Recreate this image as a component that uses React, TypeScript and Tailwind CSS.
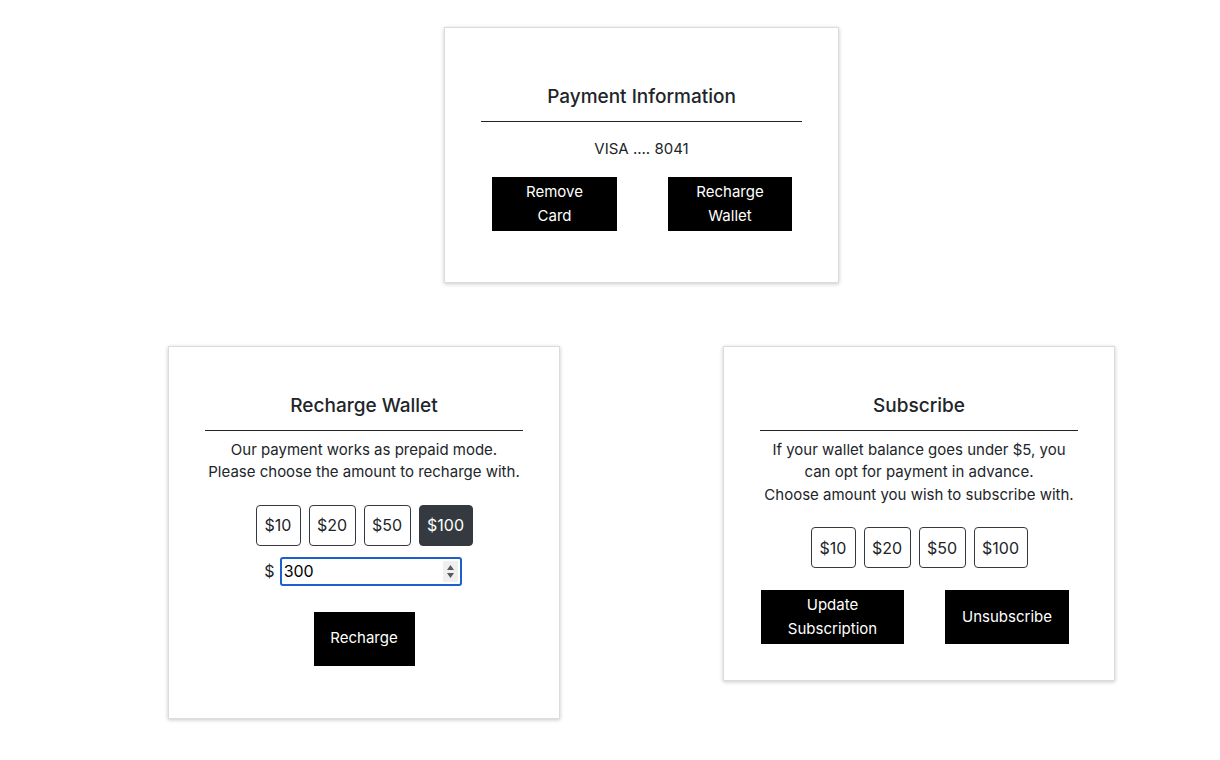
import React, { useState } from 'react';

const amounts = [
  { label: '$10', w: 'w-[45px]' },
  { label: '$20', w: 'w-[47px]' },
  { label: '$50', w: 'w-[47px]' },
  { label: '$100', w: 'w-[54px]' },
];

interface AmountPickerProps {
  selected: string | null;
  onSelect: (v: string) => void;
}

const AmountPicker: React.FC<AmountPickerProps> = ({ selected, onSelect }) => (
  <div className="flex justify-center gap-[8px]">
    {amounts.map((a) => (
      <button
        key={a.label}
        onClick={() => onSelect(a.label)}
        className={`${a.w} h-[41px] rounded-[4px] border text-[16px] leading-none ${
          selected === a.label
            ? 'bg-[#343a40] border-[#343a40] text-white'
            : 'bg-white border-[#343a40] text-[#212529]'
        }`}
      >
        {a.label}
      </button>
    ))}
  </div>
);

const Card: React.FC<{ className?: string; title: string; children: React.ReactNode }> = ({ className, title, children }) => (
  <div className={`bg-white border border-[#dcdcdc] shadow-[0_1px_4px_rgba(0,0,0,0.22)] px-[36px] ${className ?? ''}`}>
    <h5 className="text-center text-[19px] leading-[24px] font-medium text-[#212529]">{title}</h5>
    <div className="mt-[12px] h-px bg-[#212529]" />
    {children}
  </div>
);

const App: React.FC = () => {
  const [recharge, setRecharge] = useState<string | null>('$100');
  const [subscribe, setSubscribe] = useState<string | null>(null);
  const [custom, setCustom] = useState('300');

  return (
    <div
      className="min-h-[760px] w-full bg-white pl-[63px] text-[#212529]"
      style={{ fontFamily: 'Inter, "Liberation Sans", sans-serif' }}
    >
      <div className="flex flex-col items-center pt-[27px]">
        {/* payment info */}
        <Card className="w-[395px] pt-[57px] pb-[51px]" title="Payment Information">
          <p className="mt-[16px] text-center text-[15px] leading-[22.5px]">VISA .... 8041</p>
          <div className="mt-[16px] flex gap-[51px] pl-[11px]">
            <button className="w-[125px] h-[54px] bg-black text-white text-[15px] leading-[24px]">
              Remove<br />Card
            </button>
            <button className="w-[124px] h-[54px] bg-black text-white text-[15px] leading-[24px]">
              Recharge<br />Wallet
            </button>
          </div>
        </Card>

        <div className="mt-[63px] flex items-start gap-[163px]">
          {/* recharge */}
          <Card className="w-[392px] pt-[47px] pb-[52px]" title="Recharge Wallet">
            <p className="mt-[8px] text-center text-[15px] leading-[22.5px]">
              Our payment works as prepaid mode.
              <br />
              Please choose the amount to recharge with.
            </p>
            <div className="mt-[21px]">
              <AmountPicker selected={recharge} onSelect={setRecharge} />
            </div>
            <div className="mt-[11px] flex items-center justify-center gap-[5px] pr-[2px]">
              <span className="text-[16px]">$</span>
              <div className="flex h-[29px] w-[182px] items-center rounded-[3px] border-2 border-[#1c5fcf] pl-[2px] pr-[2px]">
                <input
                  value={custom}
                  onChange={(e) => setCustom(e.target.value)}
                  className="min-w-0 flex-1 bg-transparent text-[16px] text-black outline-none"
                />
                <div className="flex h-[21px] w-[15px] flex-col items-center justify-center gap-[3px] bg-[#efefef]">
                  <svg width="7" height="5" viewBox="0 0 7 5"><path d="M3.5 0L7 5H0z" fill="#5a5a5a" /></svg>
                  <svg width="7" height="5" viewBox="0 0 7 5"><path d="M0 0h7L3.5 5z" fill="#5a5a5a" /></svg>
                </div>
              </div>
            </div>
            <div className="mt-[26px] flex justify-center">
              <button className="w-[101px] h-[54px] bg-black text-white text-[15px]">Recharge</button>
            </div>
          </Card>

          {/* subscribe */}
          <Card className="w-[392px] pt-[47px] pb-[36px]" title="Subscribe">
            <p className="mt-[8px] text-center text-[15px] leading-[22.5px]">
              If your wallet balance goes under $5, you
              <br />
              can opt for payment in advance.
              <br />
              Choose amount you wish to subscribe with.
            </p>
            <div className="mt-[21px]">
              <AmountPicker selected={subscribe} onSelect={setSubscribe} />
            </div>
            <div className="mt-[22px] flex gap-[41px] pl-[1px]">
              <button className="w-[143px] h-[54px] bg-black text-white text-[15px] leading-[24px]">
                Update<br />Subscription
              </button>
              <button className="w-[124px] h-[54px] bg-black text-white text-[15px]">Unsubscribe</button>
            </div>
          </Card>
        </div>
      </div>
    </div>
  );
};

export default App;
